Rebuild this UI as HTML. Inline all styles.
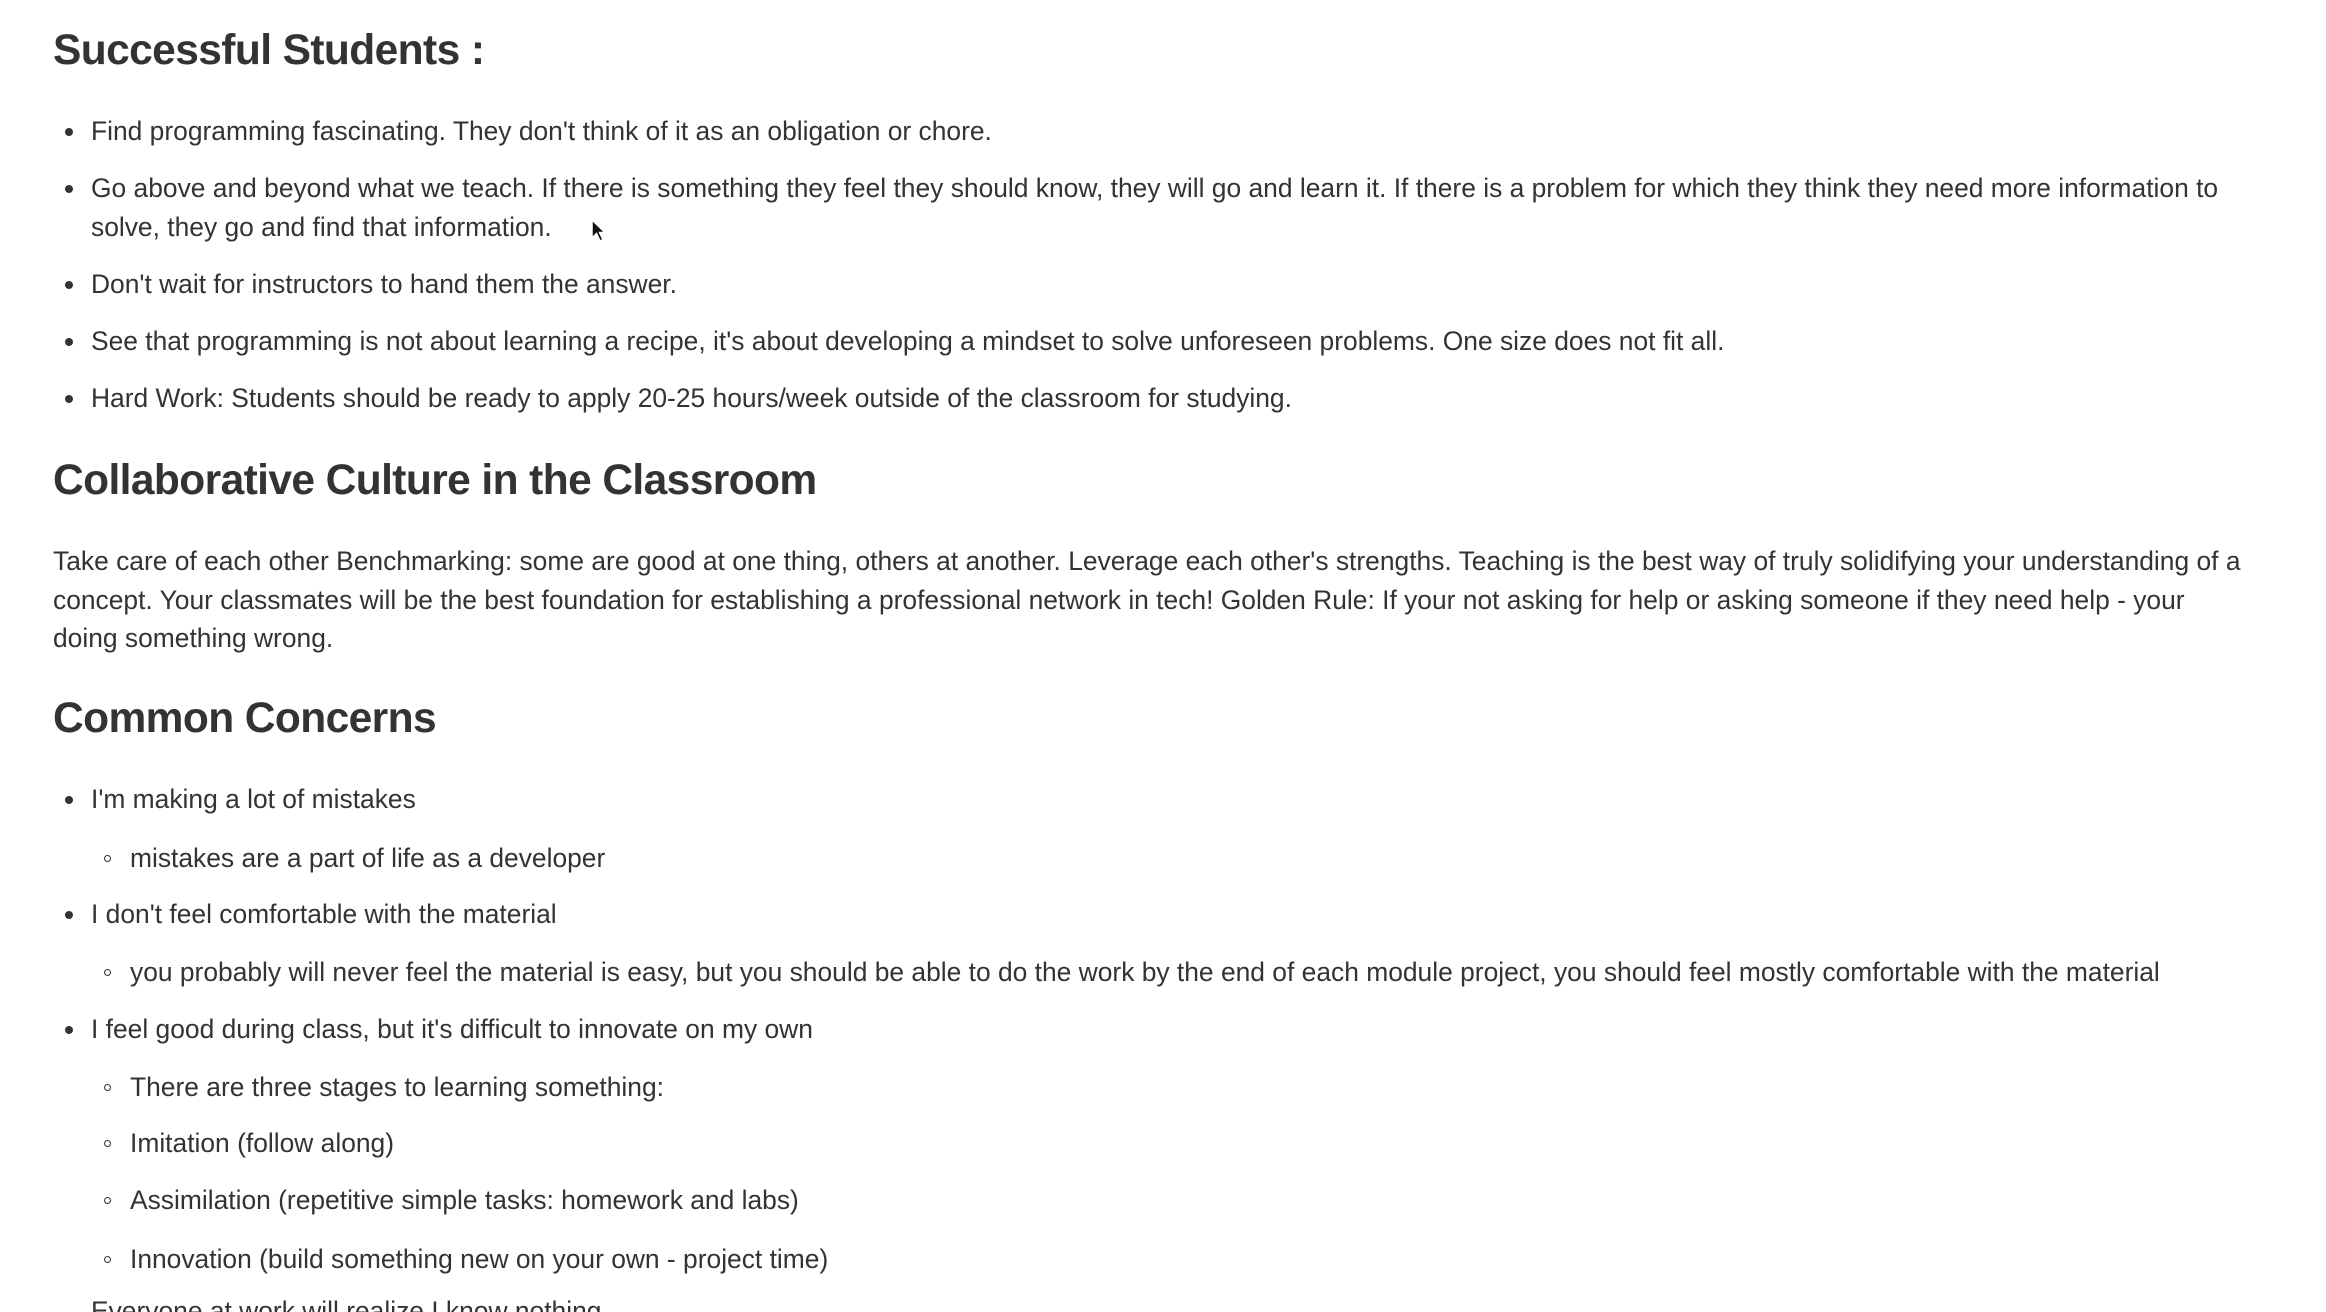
<!DOCTYPE html>
<html><head><meta charset="utf-8"><style>
html,body{margin:0;padding:0;background:#fff;width:2326px;height:1312px;overflow:hidden;position:relative}
.t{position:absolute;white-space:nowrap;font-family:"Liberation Sans",Arial,sans-serif;font-size:26.4px;line-height:39px;color:#333;letter-spacing:0}
.h{position:absolute;white-space:nowrap;font-family:"Liberation Sans",Arial,sans-serif;font-weight:bold;font-size:42.5px;line-height:50px;color:#333;letter-spacing:-0.6px}
.d{position:absolute;width:8px;height:8px;border-radius:50%;background:#333}
.c{position:absolute;width:7px;height:7px;border-radius:50%;border:1.5px solid #333;box-sizing:border-box}
</style></head><body>
<div class="h" style="left:53px;top:26px">Successful Students :</div>

<div class="d" style="left:65px;top:128px"></div>
<div class="t" style="left:91px;top:112px">Find programming fascinating. They don't think of it as an obligation or chore.</div>
<div class="d" style="left:65px;top:185px"></div>
<div class="t" style="left:91px;top:169px">Go above and beyond what we teach. If there is something they feel they should know, they will go and learn it. If there is a problem for which they think they need more information to</div>
<div class="t" style="left:91px;top:208px">solve, they go and find that information.</div>
<div class="d" style="left:65px;top:281px"></div>
<div class="t" style="left:91px;top:265px">Don't wait for instructors to hand them the answer.</div>
<div class="d" style="left:65px;top:338px"></div>
<div class="t" style="left:91px;top:322px">See that programming is not about learning a recipe, it's about developing a mindset to solve unforeseen problems. One size does not fit all.</div>
<div class="d" style="left:65px;top:395px"></div>
<div class="t" style="left:91px;top:379px">Hard Work: Students should be ready to apply 20-25 hours/week outside of the classroom for studying.</div>

<div class="h" style="left:53px;top:456px">Collaborative Culture in the Classroom</div>
<div class="t" style="left:53px;top:542px">Take care of each other Benchmarking: some are good at one thing, others at another. Leverage each other's strengths. Teaching is the best way of truly solidifying your understanding of a</div>
<div class="t" style="left:53px;top:581px">concept. Your classmates will be the best foundation for establishing a professional network in tech! Golden Rule: If your not asking for help or asking someone if they need help - your</div>
<div class="t" style="left:53px;top:619px">doing something wrong.</div>

<div class="h" style="left:53px;top:694px">Common Concerns</div>
<div class="d" style="left:65px;top:796px"></div>
<div class="t" style="left:91px;top:780px">I'm making a lot of mistakes</div>
<div class="c" style="left:104px;top:855px"></div>
<div class="t" style="left:130px;top:839px">mistakes are a part of life as a developer</div>
<div class="d" style="left:65px;top:911px"></div>
<div class="t" style="left:91px;top:895px">I don't feel comfortable with the material</div>
<div class="c" style="left:104px;top:969px"></div>
<div class="t" style="left:130px;top:953px">you probably will never feel the material is easy, but you should be able to do the work by the end of each module project, you should feel mostly comfortable with the material</div>
<div class="d" style="left:65px;top:1026px"></div>
<div class="t" style="left:91px;top:1010px">I feel good during class, but it's difficult to innovate on my own</div>
<div class="c" style="left:104px;top:1084px"></div>
<div class="t" style="left:130px;top:1068px">There are three stages to learning something:</div>
<div class="c" style="left:104px;top:1140px"></div>
<div class="t" style="left:130px;top:1124px">Imitation (follow along)</div>
<div class="c" style="left:104px;top:1197px"></div>
<div class="t" style="left:130px;top:1181px">Assimilation (repetitive simple tasks: homework and labs)</div>
<div class="c" style="left:104px;top:1256px"></div>
<div class="t" style="left:130px;top:1240px">Innovation (build something new on your own - project time)</div>
<div class="t" style="left:91px;top:1292px">Everyone at work will realize I know nothing</div>

<svg style="position:absolute;left:590px;top:218px" width="18" height="26" viewBox="0 0 18 26">
<path d="M2 2 L2 20 L6.5 15.5 L10 23 L13 21.5 L9.5 14.5 L15 14.5 Z" fill="#111" stroke="#fff" stroke-width="1.5"/>
</svg>
</body></html>
